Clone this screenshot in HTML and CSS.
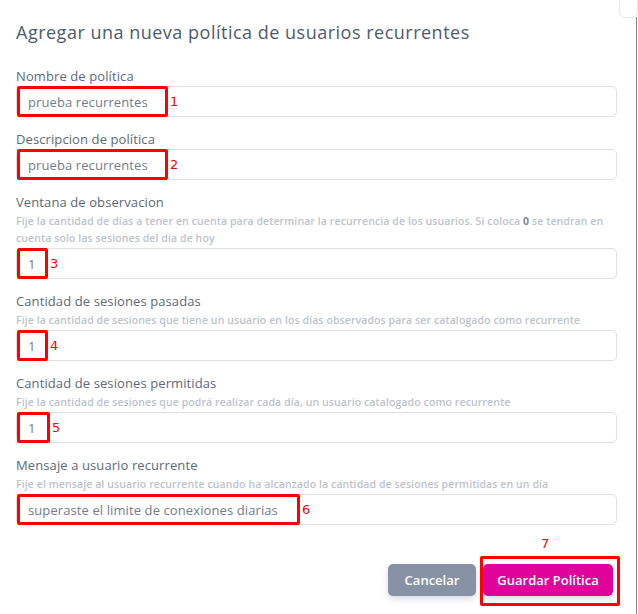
FILE: index.html
```html
<!DOCTYPE html>
<html lang="es">
<head>
    <meta charset="UTF-8">
    <meta name="viewport" content="width=device-width, initial-scale=1.0">
    <title>Agregar política de usuarios recurrentes</title>
    <link rel="stylesheet" href="styles.css">
</head>
<body>

    <div class="modal">
        <div class="close-tab"></div>

        <h2 class="modal-title">Agregar una nueva política de usuarios recurrentes</h2>

        <form class="policy-form">
            <div class="form-group">
                <label for="nombre">Nombre de política</label>
                <div class="field">
                    <input type="text" id="nombre" value="prueba recurrentes">
                    <span class="mark mark-text"><span class="mark-num">1</span></span>
                </div>
            </div>

            <div class="form-group">
                <label for="descripcion">Descripcion de política</label>
                <div class="field">
                    <input type="text" id="descripcion" value="prueba recurrentes">
                    <span class="mark mark-text"><span class="mark-num">2</span></span>
                </div>
            </div>

            <div class="form-group">
                <label for="ventana">Ventana de observacion</label>
                <p class="help">Fije la cantidad de días a tener en cuenta para determinar la recurrencia de los usuarios. Si coloca <b class="help-key">0</b> se tendran en cuenta solo las sesiones del dia de hoy</p>
                <div class="field">
                    <input type="text" id="ventana" value="1">
                    <span class="mark mark-num-field"><span class="mark-num">3</span></span>
                </div>
            </div>

            <div class="form-group">
                <label for="pasadas">Cantidad de sesiones pasadas</label>
                <p class="help">Fije la cantidad de sesiones que tiene un usuario en los días observados para ser catalogado como recurrente</p>
                <div class="field">
                    <input type="text" id="pasadas" value="1">
                    <span class="mark mark-num-field"><span class="mark-num">4</span></span>
                </div>
            </div>

            <div class="form-group">
                <label for="permitidas">Cantidad de sesiones permitidas</label>
                <p class="help">Fije la cantidad de sesiones que podrá realizar cada día, un usuario catalogado como recurrente</p>
                <div class="field">
                    <input type="text" id="permitidas" value="1">
                    <span class="mark mark-num-field mark-wider"><span class="mark-num">5</span></span>
                </div>
            </div>

            <div class="form-group">
                <label for="mensaje">Mensaje a usuario recurrente</label>
                <p class="help">Fije el mensaje al usuario recurrente cuando ha alcanzado la cantidad de sesiones permitidas en un día</p>
                <div class="field">
                    <input type="text" id="mensaje" value="superaste el limite de conexiones diarias">
                    <span class="mark mark-message"><span class="mark-num">6</span></span>
                </div>
            </div>

            <div class="actions">
                <button type="button" class="btn btn-cancel">Cancelar</button>
                <div class="save-wrap">
                    <button type="button" class="btn btn-save">Guardar Política</button>
                    <span class="mark mark-save"><span class="mark-num">7</span></span>
                </div>
            </div>
        </form>
    </div>

</body>
</html>
```

FILE: styles.css
```css
/* General Styles */
body {
    margin: 0;
    background: #ffffff;
    font-family: 'Open Sans', 'Liberation Sans', sans-serif;
}

.modal {
    position: relative;
    width: 638px;
    height: 614px;
    box-sizing: border-box;
    padding: 18px 21px 0 16px;
    overflow: hidden;
}

/* thin edge of the window behind */
.modal::after {
    content: "";
    position: absolute;
    right: 1px;
    top: 17px;
    bottom: 0;
    width: 1px;
    background: #80858c;
}

.close-tab {
    position: absolute;
    top: -6px;
    right: 0;
    width: 17px;
    height: 22px;
    border: 1px solid #e3e6ea;
    border-radius: 6px;
    background: #fff;
}

.modal-title {
    margin: 0 0 21px;
    font-size: 18px;
    line-height: 28px;
    font-weight: 500;
    color: #4d5b6f;
    letter-spacing: 0.5px;
}

.form-group {
    margin-bottom: 13px;
}

.form-group label {
    display: block;
    font-size: 13px;
    line-height: 18px;
    color: #5d6979;
    margin-bottom: 1px;
    letter-spacing: 0.1px;
}

.help {
    margin: 2px 0 1px;
    font-size: 10.5px;
    line-height: 17px;
    font-weight: 600;
    color: #bdc3cc;
    letter-spacing: 0.1px;
}

.help-key {
    color: #7f8997;
    font-weight: 700;
}

.field {
    position: relative;
}

.field input {
    display: block;
    width: 100%;
    height: 31px;
    box-sizing: border-box;
    padding: 0 11px;
    border: 1px solid #dde1e6;
    border-radius: 5px;
    font-family: inherit;
    font-size: 13px;
    color: #707d8d;
    outline: none;
    letter-spacing: 0.1px;
}

/* red annotation boxes */
.mark {
    position: absolute;
    left: 1px;
    top: 0;
    height: 31px;
    box-sizing: border-box;
    border: 3px solid #ff0000;
    border-radius: 2px;
}

.mark-text {
    width: 151px;
}

.mark-num-field {
    width: 31px;
}

.mark-wider {
    width: 33px;
}

.mark-message {
    width: 283px;
}

.mark-num {
    position: absolute;
    left: calc(100% + 5px);
    top: 4px;
    font-family: 'DejaVu Sans', sans-serif;
    font-size: 13px;
    line-height: 18px;
    color: #ff0000;
}

.actions {
    display: flex;
    justify-content: flex-end;
    gap: 7px;
    margin-top: 39px;
    padding-right: 4px;
}

.btn {
    height: 32px;
    border: none;
    border-radius: 5px;
    font-family: inherit;
    font-size: 13px;
    font-weight: 600;
    color: #fff;
    cursor: pointer;
    box-shadow: 0 3px 6px rgba(60, 70, 120, 0.2);
}

.btn-cancel {
    width: 88px;
    background: #8792a4;
}

.btn-save {
    width: 130px;
    background: #e0039b;
}

.save-wrap {
    position: relative;
}

.mark-save {
    left: -3px;
    top: -8px;
    width: 140px;
    height: 50px;
}

.mark-save .mark-num {
    left: 58px;
    top: -24px;
}
```
